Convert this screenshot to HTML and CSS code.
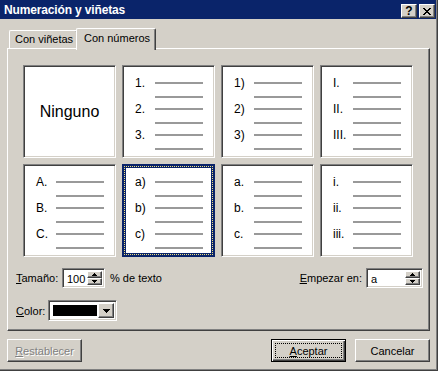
FILE: index.html
```html
<!DOCTYPE html>
<html lang="es">

<head>
  <meta charset="UTF-8">
  <title>Numeración y viñetas</title>
  <link rel="stylesheet" href="styles.css">
</head>

<body>
  <div class="frame">
    <div class="window">
      <!-- Title bar -->
      <div class="titlebar">
        <span class="title">Numeración y viñetas</span>
        <span class="title-btn">?</span>
        <span class="title-btn">
          <svg width="8" height="7" viewBox="0 0 8 7" shape-rendering="crispEdges"><path d="M0 0h2v1H0zM6 0h2v1H6zM1 1h2v1H1zM5 1h2v1H5zM2 2h4v1H2zM3 3h2v1H3zM2 4h4v1H2zM1 5h2v1H1zM5 5h2v1H5zM0 6h2v1H0zM6 6h2v1H6z"/></svg>
        </span>
      </div>

      <!-- Tabs -->
      <div class="tabs">
        <div class="tab">Con viñetas</div>
        <div class="tab active">Con números</div>
      </div>

      <div class="panel">
        <!-- Numbering styles -->
        <div class="grid">
          <div class="cell none">Ninguno</div>

          <div class="cell">
            <div class="item"><span class="num">1.</span><i class="line"></i></div>
            <div class="more"><i class="line"></i></div>
            <div class="item"><span class="num">2.</span><i class="line"></i></div>
            <div class="more"><i class="line"></i></div>
            <div class="item"><span class="num">3.</span><i class="line"></i></div>
            <div class="more"><i class="line"></i></div>
          </div>

          <div class="cell">
            <div class="item"><span class="num">1)</span><i class="line"></i></div>
            <div class="more"><i class="line"></i></div>
            <div class="item"><span class="num">2)</span><i class="line"></i></div>
            <div class="more"><i class="line"></i></div>
            <div class="item"><span class="num">3)</span><i class="line"></i></div>
            <div class="more"><i class="line"></i></div>
          </div>

          <div class="cell">
            <div class="item"><span class="num">I.</span><i class="line"></i></div>
            <div class="more"><i class="line"></i></div>
            <div class="item"><span class="num">II.</span><i class="line"></i></div>
            <div class="more"><i class="line"></i></div>
            <div class="item"><span class="num">III.</span><i class="line"></i></div>
            <div class="more"><i class="line"></i></div>
          </div>

          <div class="cell">
            <div class="item"><span class="num">A.</span><i class="line"></i></div>
            <div class="more"><i class="line"></i></div>
            <div class="item"><span class="num">B.</span><i class="line"></i></div>
            <div class="more"><i class="line"></i></div>
            <div class="item"><span class="num">C.</span><i class="line"></i></div>
            <div class="more"><i class="line"></i></div>
          </div>

          <div class="cell selected">
            <div class="item"><span class="num">a)</span><i class="line"></i></div>
            <div class="more"><i class="line"></i></div>
            <div class="item"><span class="num">b)</span><i class="line"></i></div>
            <div class="more"><i class="line"></i></div>
            <div class="item"><span class="num">c)</span><i class="line"></i></div>
            <div class="more"><i class="line"></i></div>
          </div>

          <div class="cell">
            <div class="item"><span class="num">a.</span><i class="line"></i></div>
            <div class="more"><i class="line"></i></div>
            <div class="item"><span class="num">b.</span><i class="line"></i></div>
            <div class="more"><i class="line"></i></div>
            <div class="item"><span class="num">c.</span><i class="line"></i></div>
            <div class="more"><i class="line"></i></div>
          </div>

          <div class="cell">
            <div class="item"><span class="num">i.</span><i class="line"></i></div>
            <div class="more"><i class="line"></i></div>
            <div class="item"><span class="num">ii.</span><i class="line"></i></div>
            <div class="more"><i class="line"></i></div>
            <div class="item"><span class="num">iii.</span><i class="line"></i></div>
            <div class="more"><i class="line"></i></div>
          </div>
        </div>

        <!-- Size / start / color -->
        <div class="opt-row">
          <span class="label size-label"><u>T</u>amaño:</span>
          <div class="field spin size-field">
            <span class="value">100</span>
            <div class="spinner">
              <span class="spin-btn"><svg width="5" height="3" viewBox="0 0 5 3" shape-rendering="crispEdges"><path d="M2 0h1v1h1v1h1v1H0V2h1V1h1z"/></svg></span>
              <span class="spin-btn"><svg width="5" height="3" viewBox="0 0 5 3" shape-rendering="crispEdges"><path d="M0 0h5v1H4v1H3v1H2V2H1V1H0z"/></svg></span>
            </div>
          </div>
          <span class="label pct">% de texto</span>
          <span class="label start-label"><u>E</u>mpezar en:</span>
          <div class="field spin start-field">
            <span class="value">a</span>
            <div class="spinner">
              <span class="spin-btn"><svg width="5" height="3" viewBox="0 0 5 3" shape-rendering="crispEdges"><path d="M2 0h1v1h1v1h1v1H0V2h1V1h1z"/></svg></span>
              <span class="spin-btn"><svg width="5" height="3" viewBox="0 0 5 3" shape-rendering="crispEdges"><path d="M0 0h5v1H4v1H3v1H2V2H1V1H0z"/></svg></span>
            </div>
          </div>
        </div>

        <div class="opt-row color-row">
          <span class="label color-label"><u>C</u>olor:</span>
          <div class="field combo">
            <span class="swatch"></span>
            <span class="drop-btn"><svg width="7" height="4" viewBox="0 0 7 4" shape-rendering="crispEdges"><path d="M0 0h7v1H6v1H5v1H4v1H3V3H2V2H1V1H0z"/></svg></span>
          </div>
        </div>
      </div>

      <!-- Dialog buttons -->
      <div class="buttons">
        <button class="btn disabled"><u>R</u>establecer</button>
        <div class="right-btns">
          <button class="btn default"><span class="focus"><u>A</u>ceptar</span></button>
          <button class="btn">Cancelar</button>
        </div>
      </div>
    </div>
  </div>
</body>

</html>
```

FILE: styles.css
```css
body {
  margin: 0;
  font-family: 'Liberation Sans', Arial, sans-serif;
  font-size: 11px;
  color: #000;
  background-color: #d4d0c8;
}

.frame {
  width: 438px;
  height: 371px;
  box-sizing: border-box;
  border-right: 1px solid #404040;
  border-bottom: 1px solid #404040;
}

.window {
  height: 100%;
  box-sizing: border-box;
  border-right: 1px solid #808080;
  border-bottom: 1px solid #808080;
  background-color: #d4d0c8;
}

/* Title bar */
.titlebar {
  display: flex;
  align-items: center;
  height: 19px;
  padding: 0 1px 0 4px;
  background-color: #0a246a;
}

.title {
  flex: 1;
  color: white;
  font-weight: bold;
  font-size: 12px;
  letter-spacing: -0.15px;
  padding-top: 1px;
}

.title-btn {
  display: flex;
  align-items: center;
  justify-content: center;
  width: 16px;
  height: 14px;
  box-sizing: border-box;
  margin-left: 2px;
  margin-top: 3px;
  background-color: #d4d0c8;
  border-top: 1px solid #fff;
  border-left: 1px solid #fff;
  border-right: 1px solid #404040;
  border-bottom: 1px solid #404040;
  box-shadow: inset -1px -1px 0 #808080;
  font-weight: bold;
  font-size: 12px;
  line-height: 12px;
}

/* Tabs */
.tabs {
  display: flex;
  align-items: flex-end;
  height: 20px;
  margin-top: 9px;
  padding-left: 9px;
  position: relative;
  z-index: 1;
}

.tab {
  height: 18px;
  width: 69px;
  box-sizing: border-box;
  padding: 2px 0 0 5px;
  border-top: 1px solid #fff;
  border-left: 1px solid #fff;
  border-right: 1px solid #404040;
  border-radius: 2px 2px 0 0;
  box-shadow: inset -1px 0 0 #808080;
  background-color: #d4d0c8;
}

.tab.active {
  width: 80px;
  height: 22px;
  margin-left: -2px;
  margin-bottom: -2px;
  padding: 3px 0 0 7px;
}

/* Panel */
.panel {
  width: 423px;
  height: 283px;
  box-sizing: border-box;
  margin-left: 7px;
  padding: 16px 0 0 8px;
  border-top: 1px solid #fff;
  border-left: 1px solid #fff;
  border-right: 1px solid #404040;
  border-bottom: 1px solid #404040;
  box-shadow: inset -1px -1px 0 #808080;
}

.grid {
  display: grid;
  grid-template-columns: repeat(4, 93px);
  grid-auto-rows: 93px;
  gap: 6px;
  margin-left: 7px;
}

.cell {
  position: relative;
  box-sizing: border-box;
  padding: 10px 0 0 12px;
  background-color: white;
  border-top: 1px solid #808080;
  border-left: 1px solid #808080;
  border-right: 1px solid #fff;
  border-bottom: 1px solid #fff;
  box-shadow: inset 1px 1px 0 #404040, inset -1px -1px 0 #d4d0c8;
  font-family: 'Liberation Sans', Arial, sans-serif;
  font-size: 12px;
}

.cell.none {
  display: flex;
  align-items: center;
  justify-content: center;
  padding: 0;
  font-size: 16px;
}

.cell.selected {
  border: 4px solid #0a246a;
  padding: 7px 0 0 9px;
  box-shadow: none;
}

.cell.selected::after {
  content: "";
  position: absolute;
  inset: -2px;
  border: 1px dotted #f0e080;
}

.item {
  display: flex;
  align-items: center;
  height: 14px;
}

.num {
  width: 20px;
  line-height: 14px;
}

.line {
  display: block;
  width: 48px;
  height: 2px;
  background-color: #999;
}

.more {
  height: 12px;
  box-sizing: border-box;
  padding: 6px 0 0 20px;
}

/* Options */
.opt-row {
  display: flex;
  align-items: center;
  height: 20px;
  margin-top: 11px;
  padding-right: 6px;
}

.color-row {
  height: 21px;
  margin-top: 12px;
}

.size-label {
  width: 46px;
}

.color-label {
  width: 32px;
}

.pct {
  margin-left: 5px;
}

.start-label {
  margin-left: auto;
  margin-right: 4px;
}

.field {
  display: flex;
  box-sizing: border-box;
  background-color: white;
  border-top: 1px solid #808080;
  border-left: 1px solid #808080;
  border-right: 1px solid #fff;
  border-bottom: 1px solid #fff;
  box-shadow: inset 1px 1px 0 #404040, inset -1px -1px 0 #d4d0c8;
}

.spin {
  height: 20px;
  padding: 2px;
}

.size-field {
  width: 43px;
}

.start-field {
  width: 57px;
}

.value {
  flex: 1;
  padding-left: 2px;
  line-height: 16px;
}

.spinner {
  display: flex;
  flex-direction: column;
  width: 15px;
}

.spin-btn,
.drop-btn {
  flex: 1;
  display: flex;
  align-items: center;
  justify-content: center;
  box-sizing: border-box;
  background-color: #d4d0c8;
  border-top: 1px solid #fff;
  border-left: 1px solid #fff;
  border-right: 1px solid #404040;
  border-bottom: 1px solid #404040;
  box-shadow: inset -1px -1px 0 #808080;
}

.combo {
  width: 69px;
  height: 21px;
  padding: 2px;
  align-items: stretch;
}

.swatch {
  width: 46px;
  margin: 1px 0 1px 1px;
  border: 1px solid white;
  background-color: #000;
  outline: 1px solid #fff;
}

.drop-btn {
  flex: none;
  width: 16px;
  margin-left: auto;
}

/* Buttons */
.buttons {
  display: flex;
  justify-content: space-between;
  margin: 8px 6px 0 7px;
}

.right-btns {
  display: flex;
  gap: 9px;
}

.btn {
  width: 75px;
  height: 23px;
  box-sizing: border-box;
  padding: 0;
  font-family: 'Liberation Sans', Arial, sans-serif;
  font-size: 11px;
  color: #000;
  background-color: #d4d0c8;
  border-top: 1px solid #fff;
  border-left: 1px solid #fff;
  border-right: 1px solid #404040;
  border-bottom: 1px solid #404040;
  box-shadow: inset -1px -1px 0 #808080;
}

.btn.disabled {
  color: #808080;
  text-shadow: 1px 1px 0 #fff;
}

.btn.default {
  border: 1px solid #000;
  box-shadow: inset 1px 1px 0 #fff, inset -1px -1px 0 #404040, inset -2px -2px 0 #808080;
  padding: 3px;
}

.focus {
  display: flex;
  align-items: center;
  justify-content: center;
  height: 100%;
  box-sizing: border-box;
  border: 1px dotted #000;
}
```
